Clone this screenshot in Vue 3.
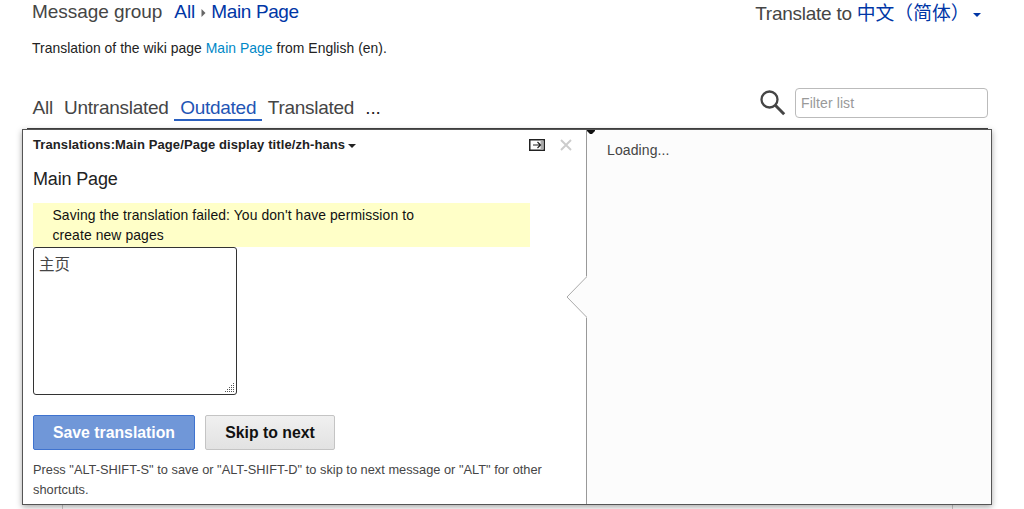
<script setup>
const tabs = ['All', 'Untranslated', 'Outdated', 'Translated', '...']
const active = 'Outdated'
</script>

<template>
  <main class="page">
    <header class="top">
      <div class="group">
        <span class="label">Message group</span>
        <a class="all">All</a>
        <svg class="crumb" width="5" height="8" viewBox="0 0 5 8"><path d="M0.5 0 4.5 4 0.5 8z" fill="#666" /></svg>
        <a class="current">Main Page</a>
      </div>
      <div class="language">
        <span class="to">Translate to</span>
        <a class="lang">中文（简体）</a>
        <svg class="caret" width="8" height="4" viewBox="0 0 8 4"><path d="M0 0H8L4 4z" fill="#0036a6" /></svg>
      </div>
    </header>
    <p class="description"><span>Translation of the wiki page <a>Main Page</a> from English (en).</span></p>
    <div class="toolbar">
      <nav class="tabs">
        <a v-for="t in tabs" :key="t" class="tab" :class="{ active: t === active, more: t === '...' }">{{ t }}</a>
      </nav>
      <div class="search">
        <svg class="glass" width="26" height="26" viewBox="0 0 26 26" fill="none" stroke="#454545">
          <circle cx="9.5" cy="9.5" r="8" stroke-width="2.3" />
          <path d="M15.3 15.3 24.2 24.2" stroke-width="3" />
        </svg>
        <input class="filter" type="text" placeholder="Filter list" />
      </div>
    </div>
    <section class="editor">
      <div class="edit">
        <div class="heading">
          <strong>Translations:Main Page/Page display title/zh-hans</strong>
          <svg class="menu" width="8" height="4" viewBox="0 0 8 4"><path d="M0 0H8L4 4z" fill="#222" /></svg>
          <svg class="expand" width="16" height="12" viewBox="0 0 16 12">
            <rect x="0.75" y="0.75" width="14.5" height="10.5" fill="#fff" stroke="#222" stroke-width="1.5" />
            <path d="M11.5 1.5h3v9h-3z" fill="#aaa" />
            <path d="M4 6H11.5M8.5 3 11.5 6 8.5 9" fill="none" stroke="#222" stroke-width="1.2" />
          </svg>
          <svg class="close" width="12" height="12" viewBox="0 0 12 12"><path d="M1 1 11 11M11 1 1 11" stroke="#ccc" stroke-width="1.9" /></svg>
        </div>
        <div class="source"><span>Main Page</span></div>
        <div class="warning"><span>Saving the translation failed: You don't have permission to</span><br /><span class="second">create new pages</span></div>
        <div class="field">
          <span>主页</span>
          <svg class="grip" width="12" height="12" viewBox="0 0 12 12" stroke="#555" fill="none">
            <path d="M9 1.5h1M7 3.5h3M5 5.5h5M3 7.5h7M1 9.5h9" stroke-dasharray="1 1" />
          </svg>
        </div>
        <div class="actions">
          <button class="save"><span>Save translation</span></button>
          <button class="skip"><span>Skip to next</span></button>
        </div>
        <p class="hint"><span>Press "ALT-SHIFT-S" to save or "ALT-SHIFT-D" to skip to next message or "ALT" for other</span><br /><span class="last">shortcuts.</span></p>
      </div>
      <aside class="help">
        <svg class="tick" width="8" height="4" viewBox="0 0 8 4"><path d="M0 0H8V1L5 4H3L0 1z" fill="#111" /></svg>
        <svg class="pointer" width="22" height="42" viewBox="0 0 22 42">
          <path d="M22 0H20.5V1L1 21 20.5 41V42H22z" fill="#fcfcfc" />
          <path d="M20.5 1 1 21 20.5 41" fill="none" stroke="#aaa" />
        </svg>
        Loading...
      </aside>
    </section>
    <div class="below"></div>
  </main>
</template>

<style>
html, body { margin: 0; overflow: hidden; background: #fff; }
</style>

<style scoped>
.page {
  box-sizing: border-box;
  width: 1024px;
  height: 509px;
  overflow: hidden;
  font-family: "Liberation Sans", Arial, "Noto Sans CJK SC", sans-serif;
  color: #222;
}
.top {
  display: flex;
  justify-content: space-between;
  height: 36px;
  padding: 0 43px 0 32px;
  font-size: 19px;
  line-height: 24px;
  color: #454545;
}
.group, .language { display: flex; white-space: nowrap; }
.label { letter-spacing: -.06px; }
.current { letter-spacing: -.38px; }
.to { letter-spacing: -.25px; }
.language { padding-top: 2px; }
.top a { color: #0036a6; }
.all { margin-left: 12px; }
.crumb { margin: 9px 5px 0 6px; }
.lang { margin-left: 5px; font-size: 18.8px; }
.caret { margin: 11px 0 0 3.5px; }
.description { margin: 0; padding-left: 32px; height: 52px; font-size: 13.9px; letter-spacing: .045px; line-height: 24px; white-space: nowrap; }
.description a { color: #0088c7; }
.toolbar {
  display: flex;
  justify-content: space-between;
  height: 40px;
  margin: 0 36px 0 27px;
  border-bottom: 1px solid #444;
}
.tabs { display: flex; height: 33px; color: #454545; font-size: 19px; line-height: 39px; letter-spacing: -.27px; }
.tab { box-sizing: border-box; height: 33px; padding: 0 5.6px; }
.tab.active { padding: 0 6px; color: #1f55b5; border-bottom: 2px solid #2a60c0; }
.tab.more { color: #222; letter-spacing: -.2px; }
.search { display: flex; }
.glass { margin: 2px 9px 0 0; }
.filter {
  box-sizing: border-box;
  width: 193px;
  height: 30px;
  padding: 0 5px;
  border: 1px solid #bbb;
  border-radius: 4px;
  font: 14px "Liberation Sans", sans-serif;
  letter-spacing: .1px;
}
.filter::placeholder { color: #999; opacity: 1; }
.editor {
  position: relative;
  box-sizing: border-box;
  display: flex;
  width: 970px;
  height: 376px;
  margin-left: 22px;
  border: 1px solid #555;
  background: #fff;
  box-shadow: 0 2px 6px rgba(0, 0, 0, .35);
}
.edit { box-sizing: border-box; width: 563px; padding-left: 10px; white-space: nowrap; }
.heading { display: flex; height: 35px; font-size: 13px; line-height: 30px; letter-spacing: .09px; }
.menu { margin: 14px 0 0 3px; }
.expand { margin: 9px 15px 0 auto; }
.close { margin: 9px 14px 0 0; }
.source { height: 38px; font-size: 18px; line-height: 28px; letter-spacing: -.15px; }
.warning {
  box-sizing: border-box;
  width: 497px;
  height: 44px;
  padding: 2px 19.5px 0;
  background: #ffffc8;
  color: #111;
  font-size: 13.9px;
  line-height: 20px;
  letter-spacing: .1px;
}
.field {
  position: relative;
  box-sizing: border-box;
  width: 204px;
  height: 148px;
  padding: 2px 5px;
  border: 1px solid #333;
  border-radius: 3px;
  font-size: 15.5px;
  line-height: 30px;
  color: #454545;
}
.grip { position: absolute; right: 0; bottom: 0; }
.actions { display: flex; gap: 10px; margin-top: 20px; }
.actions button {
  box-sizing: border-box;
  height: 35px;
  padding: 0;
  border: 1px solid #3f73cf;
  border-radius: 2px;
  font: bold 15.8px "Liberation Sans", sans-serif;
}
.actions .save { width: 162px; color: #fff; background: #7097d8; }
.actions .skip { width: 130px; color: #111; background: linear-gradient(#f0f0f0, #e2e2e2); border-color: #c4c4c4; }
.hint { margin: 10px 0 0; font-size: 12.8px; line-height: 20px; color: #454545; letter-spacing: .01px; }
.help {
  position: relative;
  box-sizing: border-box;
  flex: 1;
  padding: 8px 20px;
  border-left: 1px solid #999;
  background: #fcfcfc;
  font-size: 14px;
  line-height: 24px;
  letter-spacing: .1px;
  color: #454545;
}
.tick { position: absolute; left: 0; top: 0; }
.pointer { position: absolute; left: -21px; top: 146px; }
.below { height: 10px; width: 889px; margin-left: 62px; border: solid #ccc; border-width: 0 1px; }
</style>
